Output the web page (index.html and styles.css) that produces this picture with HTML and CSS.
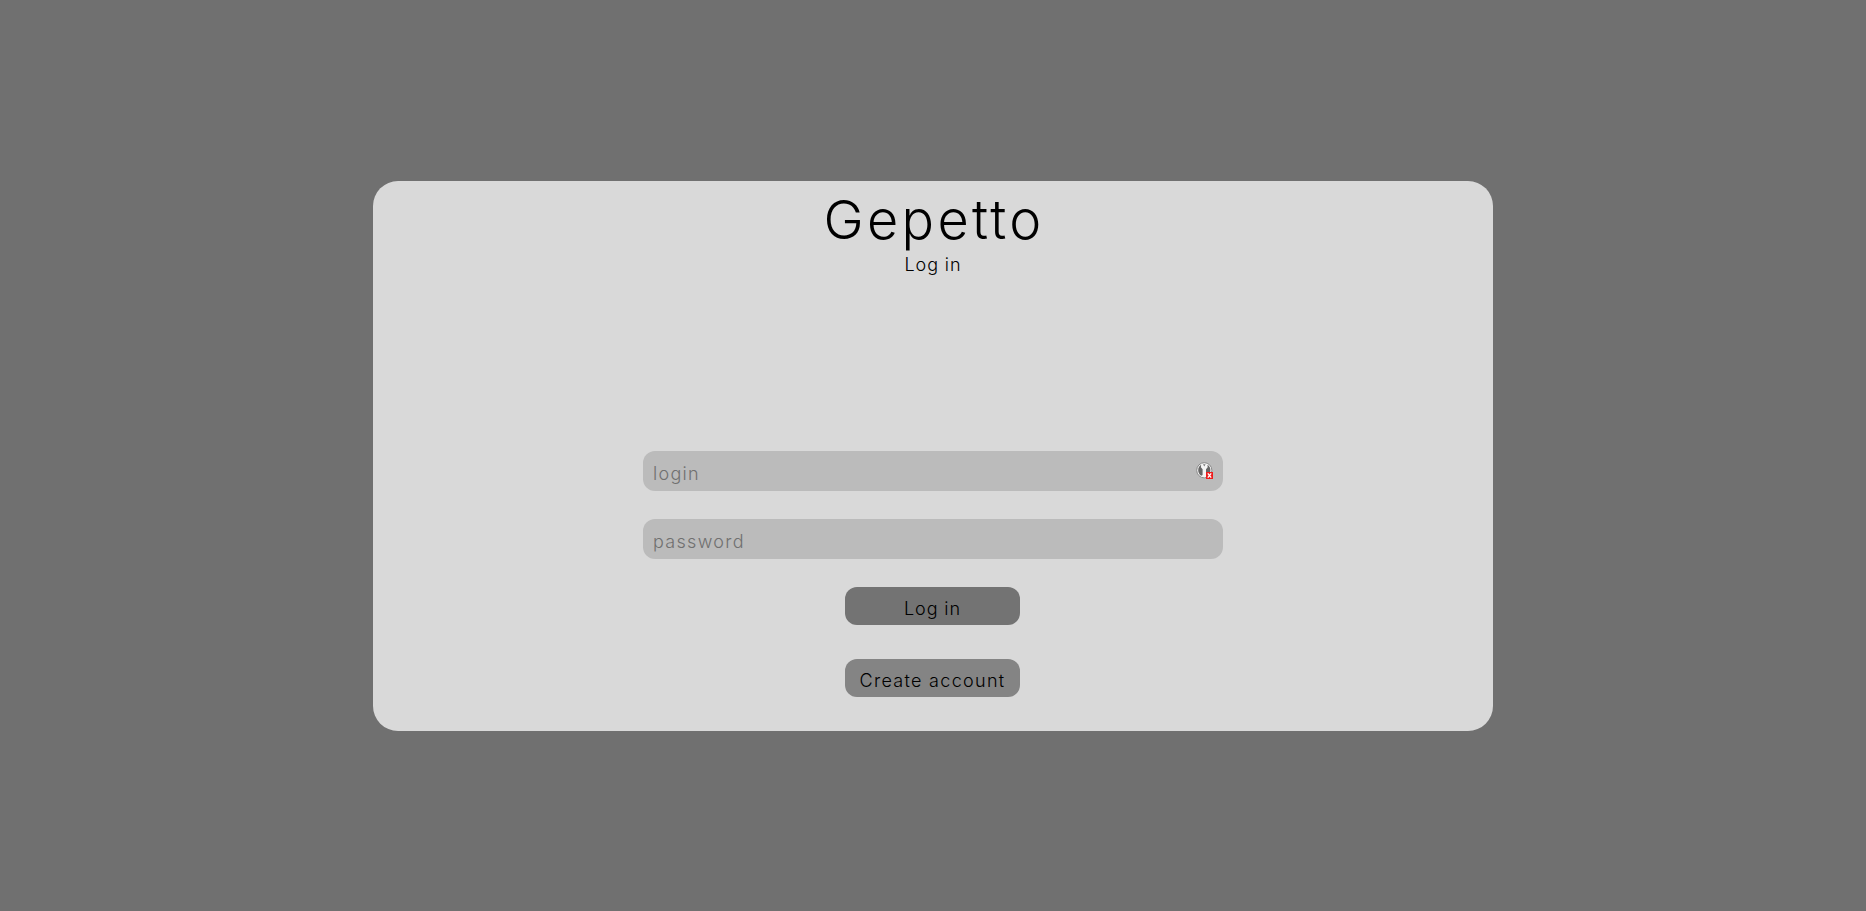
FILE: index.html
```html
<!DOCTYPE html>
<html lang="en">
<head>
<meta charset="utf-8">
<title>Gepetto</title>
<link rel="stylesheet" href="styles.css">
</head>
<body>
<main class="card">
  <h1 class="title">Gepetto</h1>
  <p class="subtitle">Log in</p>
  <form class="form">
    <div class="field">
      <input class="input login" type="text" placeholder="login">
      <svg class="badge" viewBox="0 0 18 18" width="18" height="18">
        <circle cx="8.3" cy="8.3" r="7.6" fill="#f4f4f4" stroke="#8a8a8a" stroke-width="1"/>
        <path d="M5.2 2.8C1.2 5 1.2 11.4 5.2 13.8L6.6 13V7.2L4.9 5.2Z" fill="#666"/>
        <path d="M11.4 2.8C15.4 5 15.4 11.4 11.4 13.8L10 13V7.2L11.7 5.2Z" fill="#666"/>
        <path d="M7 2.2h2.6L8.3 4.4Z" fill="#777"/>
        <rect x="10" y="10" width="7" height="7" fill="#ee1c1c"/>
        <path d="M11.8 11.3l3.4 4.4M15.2 11.3l-3.4 4.4" stroke="#fff" stroke-width="1.3"/>
      </svg>
    </div>
    <div class="field"><input class="input password" type="password" placeholder="password"></div>
    <button class="button primary" type="button">Log in</button>
    <button class="button secondary" type="button">Create account</button>
  </form>
</main>
</body>
</html>
```
FILE: styles.css
```css
* { box-sizing: border-box; }

body {
  margin: 0;
  height: 911px;
  padding-top: 181px;
  background: #707070;
  color: #000;
  font-family: Inter, "Liberation Sans", sans-serif;
  overflow: hidden;
}

.card {
  width: 1120px;
  height: 550px;
  margin: 0 auto;
  padding-top: 6px;
  display: flex;
  flex-direction: column;
  align-items: center;
  background: #d9d9d9;
  border-radius: 25px;
}

.title {
  margin: 0;
  padding-left: 2px;
  font-size: 54px;
  font-weight: 300;
  line-height: 66px;
  letter-spacing: 3.3px;
}

.subtitle {
  margin: 0;
  font-size: 18px;
  font-weight: 300;
  line-height: 24px;
  letter-spacing: 0.9px;
}

.form {
  display: flex;
  flex-direction: column;
  align-items: center;
  margin-top: 174px;
}

.field {
  position: relative;
  height: 40px;
  margin-bottom: 28px;
}

.input {
  display: block;
  width: 580px;
  height: 40px;
  padding: 4px 10px 0;
  border: 0;
  border-radius: 12px;
  background: #bbb;
  font: 300 18px Inter, "Liberation Sans", sans-serif;
  letter-spacing: 1.3px;
}

.input::placeholder { color: #707070; }

.badge {
  position: absolute;
  right: 9px;
  top: 11px;
}

.button {
  width: 175px;
  height: 38px;
  margin-right: 1px;
  padding: 4px 0 0;
  border: 0;
  border-radius: 12px;
  color: #000;
  font: 300 18px Inter, "Liberation Sans", sans-serif;
  white-space: nowrap;
}

.primary {
  background: #737373;
  letter-spacing: 0.9px;
}

.secondary {
  margin-top: 34px;
  background: #848484;
  letter-spacing: 1.3px;
}
```
